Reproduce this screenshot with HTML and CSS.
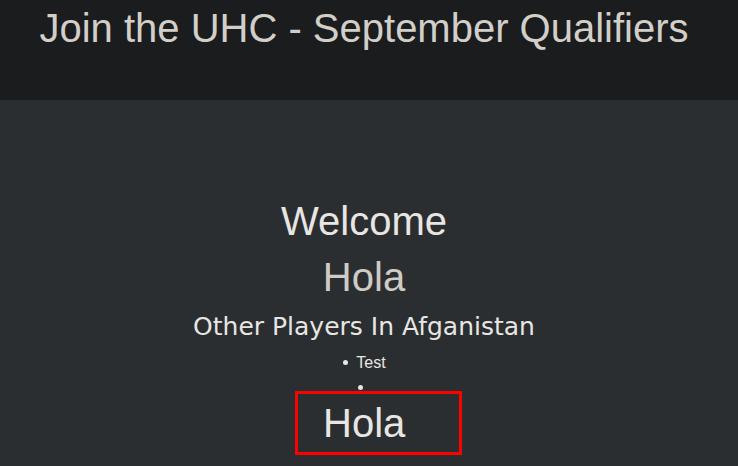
FILE: index.html
```html
<!DOCTYPE html>
<html lang="en">
<head>
<meta charset="utf-8">
<title>Join the UHC - September Qualifiers</title>
<link rel="stylesheet" href="styles.css">
</head>
<body>
<header class="top">
  <h1 class="top-title">Join the UHC - September Qualifiers</h1>
</header>
<main class="content">
  <h2 class="welcome">Welcome</h2>
  <h2 class="greet">Hola</h2>
  <h3 class="players-title">Other Players In Afganistan</h3>
  <ul class="players">
    <li class="player">Test</li>
    <li class="player player-empty"></li>
  </ul>
  <div class="hola-box">Hola</div>
</main>
</body>
</html>
```

FILE: styles.css
```css
html, body {
  margin: 0;
  padding: 0;
}
body {
  background: #2b2e31;
  font-family: "Liberation Sans", Arial, sans-serif;
  color: #e8e6e3;
  min-height: 466px;
  overflow: hidden;
}
.top {
  background: #1b1c1e;
  height: 100px;
  padding-right: 10px;
  box-sizing: border-box;
}
.top-title {
  margin: 0;
  padding-top: 5px;
  font-size: 40px;
  line-height: 46px;
  font-weight: normal;
  text-align: center;
  color: #d2cfc9;
}
.content {
  padding-right: 10px;
  padding-top: 98px;
  text-align: center;
}
.welcome {
  margin: 0;
  font-size: 40px;
  line-height: 46px;
  font-weight: normal;
  color: #e8e6e3;
}
.greet {
  margin: 10px 0 0;
  font-size: 40px;
  line-height: 46px;
  font-weight: normal;
  color: #cfcbc5;
}
.players-title {
  margin: 12px 0 0;
  font-family: "DejaVu Sans", Verdana, sans-serif;
  font-size: 25px;
  line-height: 29px;
  font-weight: normal;
  color: #e8e6e3;
}
.players {
  margin: 13px 0 0;
  padding: 0;
  list-style: none;
  font-size: 16px;
  line-height: 18px;
}
.player::before {
  content: "";
  display: inline-block;
  width: 5px;
  height: 5px;
  border-radius: 50%;
  background: currentColor;
  vertical-align: 3px;
  margin: 0 8px 0 1px;
}
.player-empty {
  height: 19px;
  line-height: 31px;
}
.hola-box {
  box-sizing: border-box;
  width: 167px;
  margin-left: 295px;
  border: 3px solid #ff0000;
  padding: 6px 0 6px 25px;
  text-align: left;
  font-size: 40px;
  line-height: 46px;
  color: #e8e6e3;
}
```
